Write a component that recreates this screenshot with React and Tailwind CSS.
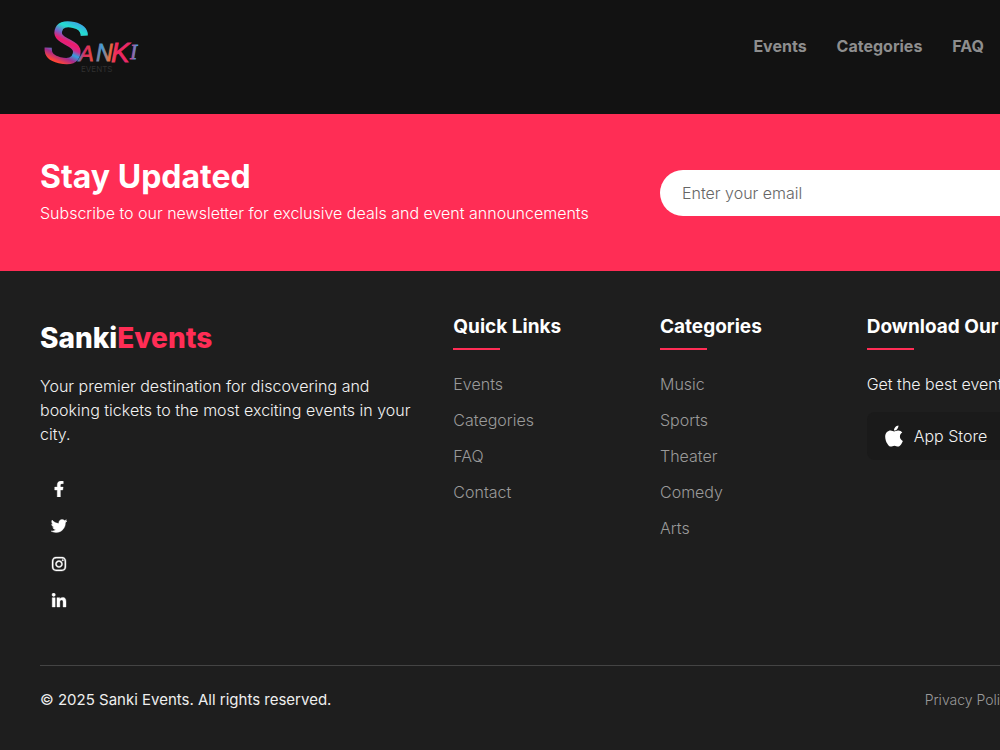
import React, { useState } from "react";
import { FaApple, FaFacebookF, FaInstagram, FaLinkedinIn, FaTwitter } from "react-icons/fa";

const navLinks = ["Events", "Categories", "FAQ"];
const quickLinks = ["Events", "Categories", "FAQ", "Contact"];
const categories = ["Music", "Sports", "Theater", "Comedy", "Arts"];

const socials = [
  { name: "Facebook", Icon: FaFacebookF },
  { name: "Twitter", Icon: FaTwitter },
  { name: "Instagram", Icon: FaInstagram },
  { name: "LinkedIn", Icon: FaLinkedinIn },
];

const Logo = () => (
  <svg width="104" height="64" viewBox="0 0 104 64" className="overflow-visible" role="img" aria-label="Sanki Events">
    <defs>
      <linearGradient id="swoosh" gradientUnits="userSpaceOnUse" x1="34" y1="4" x2="24" y2="52">
        <stop offset="0" stopColor="#3f9fe8" />
        <stop offset="0.18" stopColor="#22e0cf" />
        <stop offset="0.34" stopColor="#7a5fc5" />
        <stop offset="0.46" stopColor="#ef1a6b" />
        <stop offset="0.56" stopColor="#d02a8c" />
        <stop offset="0.66" stopColor="#2f9fe0" />
        <stop offset="0.78" stopColor="#a52a8c" />
        <stop offset="0.92" stopColor="#ff4438" />
      </linearGradient>
      <linearGradient id="letters" gradientUnits="userSpaceOnUse" x1="38" y1="30" x2="100" y2="36">
        <stop offset="0" stopColor="#2fa3c9" />
        <stop offset="0.12" stopColor="#e0295f" />
        <stop offset="0.26" stopColor="#e2503f" />
        <stop offset="0.38" stopColor="#3a9fe0" />
        <stop offset="0.52" stopColor="#e8703a" />
        <stop offset="0.62" stopColor="#f0265f" />
        <stop offset="0.84" stopColor="#e92a68" />
        <stop offset="0.94" stopColor="#4a9be6" />
      </linearGradient>
    </defs>
    <g fontFamily="Liberation Sans, sans-serif" fontStyle="italic">
      <text x="6" y="47" fontSize="59" fill="url(#swoosh)" stroke="url(#swoosh)" strokeWidth="2" transform="rotate(13 27 26)">
        S
      </text>
      <g fill="url(#letters)" stroke="url(#letters)" strokeWidth="0.8">
        <text x="39" y="45" fontSize="22">
          A
        </text>
        <text x="56" y="45" fontSize="23">
          N
        </text>
        <text x="71" y="46" fontSize="28">
          K
        </text>
        <text x="90" y="43" fontSize="21" fontFamily="Liberation Serif, serif">
          I
        </text>
      </g>
    </g>
    <text x="41" y="56" fontSize="8" fontFamily="Inter, sans-serif" fill="#303030">
      EVENTS
    </text>
  </svg>
);

const ColumnTitle = ({ children }) => (
  <>
    <h3 className="text-[19px] leading-6 font-bold text-white whitespace-nowrap">{children}</h3>
    <div className="mt-[9px] mb-[22px] h-0.5 w-[47px] bg-[#ff2d55]" />
  </>
);

const LinkList = ({ items }) => (
  <ul className="space-y-3">
    {items.map((item) => (
      <li key={item}>
        <a href="#" className="block leading-6 font-light text-[#9a9a9a] hover:text-white">
          {item}
        </a>
      </li>
    ))}
  </ul>
);

const Header = () => (
  <header className="flex items-start justify-between bg-[#121212] pl-10 pr-4 pt-4 pb-[34px]">
    <a href="#">
      <Logo />
    </a>
    <nav className="mt-[18px] flex gap-[30px]">
      {navLinks.map((link) => (
        <a key={link} href="#" className="text-base leading-6 font-bold text-[#8e8e8e] hover:text-white">
          {link}
        </a>
      ))}
    </nav>
  </header>
);

const Newsletter = () => {
  const [email, setEmail] = useState("");

  return (
    <section className="bg-[#ff2d55] px-10 pt-[43px] pb-[46px]">
      <div className="grid min-w-[1240px] grid-cols-2 items-center">
        <div>
          <h2 className="mb-1 text-[32px] leading-10 font-bold text-white">Stay Updated</h2>
          <p className="leading-6 font-light text-white">
            Subscribe to our newsletter for exclusive deals and event announcements
          </p>
        </div>
        <form className="pt-1" onSubmit={(e) => e.preventDefault()}>
          <input
            type="email"
            aria-label="Email"
            placeholder="Enter your email"
            value={email}
            onChange={(e) => setEmail(e.target.value)}
            className="block h-[46px] w-full rounded-full bg-white px-[22px] font-light text-gray-900 placeholder:text-[#666666] outline-none"
          />
        </form>
      </div>
    </section>
  );
};

const Footer = () => (
  <footer className="px-10 pt-11 pb-9">
    <div className="min-w-[1240px]">
      <div className="grid grid-cols-6">
        <div className="col-span-2 pt-0.5">
          <h2 className="text-[28px] leading-[42px] font-extrabold text-white">
            Sanki<span className="text-[#ff2d55]">Events</span>
          </h2>
          <p className="mt-[15px] pr-8 leading-6 font-light text-[#f2f2f2]">
            Your premier destination for discovering and booking tickets to the most exciting events in your city.
          </p>
          <div className="mt-6 grid h-[150px] w-[37px] grid-rows-4">
            {socials.map(({ name, Icon }) => (
              <a
                key={name}
                href="#"
                aria-label={name}
                className="flex items-center justify-center text-white hover:text-[#ff2d55]"
              >
                <Icon className="h-4 w-4 stroke-white stroke-[12]" />
              </a>
            ))}
          </div>
        </div>
        <div>
          <ColumnTitle>Quick Links</ColumnTitle>
          <LinkList items={quickLinks} />
        </div>
        <div>
          <ColumnTitle>Categories</ColumnTitle>
          <LinkList items={categories} />
        </div>
        <div className="col-span-2">
          <ColumnTitle>Download Our App</ColumnTitle>
          <p className="leading-6 font-light text-[#f2f2f2]">Get the best event experience</p>
          <a
            href="#"
            className="mt-4 flex h-12 w-40 items-center gap-2 rounded-lg bg-[#1a1a1a] px-[15px] font-light text-[#f2f2f2]"
          >
            <FaApple className="h-6 w-6 text-white" />
            <span>App Store</span>
          </a>
        </div>
      </div>

      <div className="mt-[45px] grid grid-cols-6 border-t border-[#444444] pt-[22px]">
        <p className="col-span-4 text-[15px] leading-6 text-[#eeeeee]">© 2025 Sanki Events. All rights reserved.</p>
        <a href="#" className="col-span-2 pl-[58px] text-sm leading-6 font-light text-[#9a9a9a] hover:text-white">
          Privacy Policy
        </a>
      </div>
    </div>
  </footer>
);

const App = () => (
  <div className="min-h-screen overflow-x-hidden bg-[#1e1e1e] font-['Inter',sans-serif] text-base">
    <Header />
    <Newsletter />
    <Footer />
  </div>
);

export default App;
